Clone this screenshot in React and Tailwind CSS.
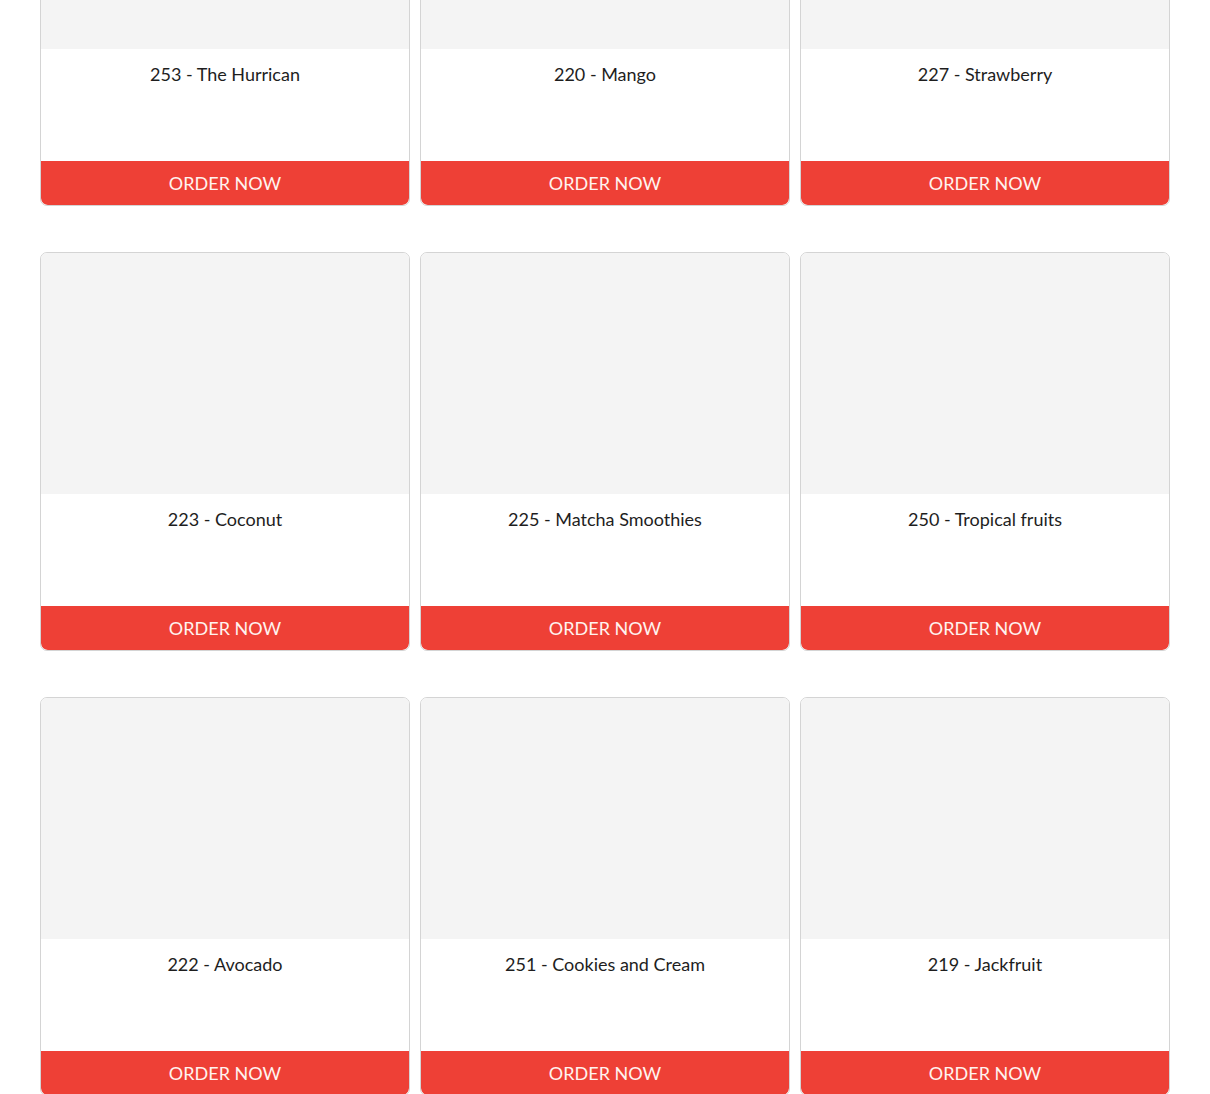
import React from "react";

const items = [
  "253 - The Hurrican",
  "220 - Mango",
  "227 - Strawberry",
  "223 - Coconut",
  "225 - Matcha Smoothies",
  "250 - Tropical fruits",
  "222 - Avocado",
  "251 - Cookies and Cream",
  "219 - Jackfruit",
];

function Card({ title }) {
  return (
    <div className="flex flex-col h-[399px] border border-[#d4d4d4] rounded-[7px] overflow-hidden bg-white">
      <div className="h-[241px] bg-[#f4f4f4] shrink-0" />
      <div className="flex-1 pt-[14px] text-center text-[18px] leading-[22px] text-[#1e1e1e]">
        {title}
      </div>
      <button className="h-[44px] bg-[#ee4036] text-[#fff3ef] text-[18px] flex items-center justify-center rounded-b-[7px] shrink-0">
        ORDER NOW
      </button>
    </div>
  );
}

export default function App() {
  return (
    <div
      className="bg-white h-[1094px] overflow-hidden"
      style={{ fontFamily: "Lato, 'Noto Sans', sans-serif" }}
    >
      <div className="px-10 -mt-[193px] grid grid-cols-3 gap-x-[10px] gap-y-[46px]">
        {items.map((t) => (
          <Card key={t} title={t} />
        ))}
      </div>
    </div>
  );
}
